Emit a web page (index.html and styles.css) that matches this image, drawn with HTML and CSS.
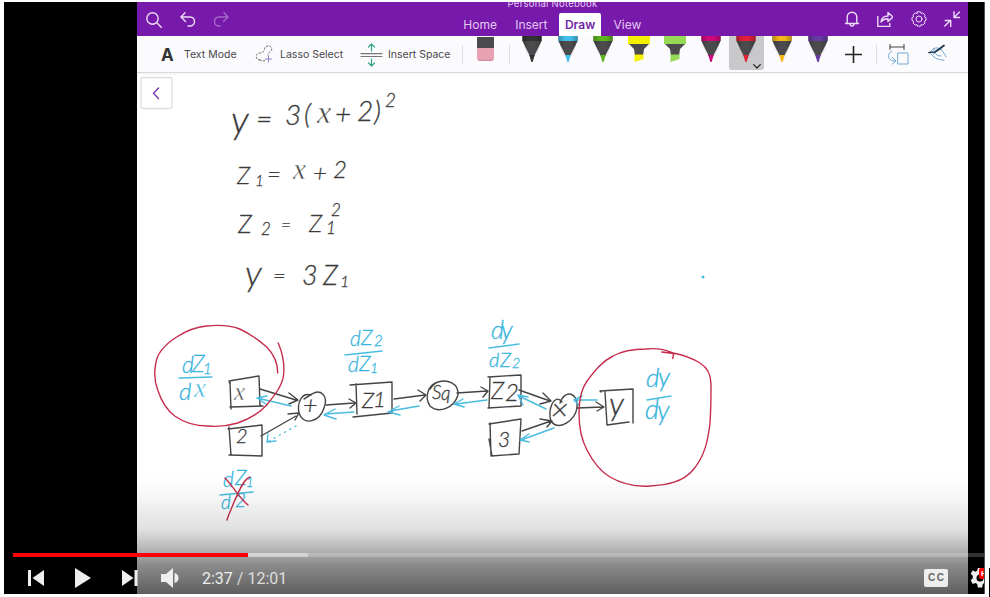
FILE: index.html
```html
<!DOCTYPE html>
<html lang="en">
<head>
<meta charset="utf-8">
<title>Personal Notebook</title>
<link rel="stylesheet" href="styles.css">
</head>
<body>
<svg class="defs" aria-hidden="true">
  <defs>
    <linearGradient id="shade" x1="0" x2="1" y1="0" y2="0">
      <stop offset="0" stop-color="#000" stop-opacity=".25"/>
      <stop offset=".35" stop-color="#000" stop-opacity="0"/>
      <stop offset=".65" stop-color="#000" stop-opacity="0"/>
      <stop offset="1" stop-color="#000" stop-opacity=".25"/>
    </linearGradient>
    <symbol id="pen" viewBox="0 0 20 27">
      <path fill="#4b4b4e" d="M.5 0h19v5l-7.300 15H7.800L.5 5z"/>
      <path fill="currentColor" d="M.5 0h19v5H.5zM7.200 19h5.600L10.600 26H9.400z"/>
      <path fill="url(#shade)" d="M.5 0h19v5l-7.700 21h-3.600L.5 5z"/>
    </symbol>
    <symbol id="marker" viewBox="0 0 22 27">
      <path fill="#4b4b4e" d="M0 7h22l-6 6-1 7H7L6 13z"/>
      <path fill="currentColor" d="M0 0h22v8H0zM6.500 18.500h9v4.500l-9 3z"/>
    </symbol>
  </defs>
</svg>
<div class="player">
  <div class="notebook">
    <header class="titlebar">
      <div class="actions">
        <svg class="ic16" viewBox="0 0 16 16"><circle cx="6.500" cy="6.500" r="5.700"/><path d="M10.800 10.800l4.700 4.700"/></svg>
        <svg class="ic16" viewBox="0 0 16 16"><path d="M5 .8L1 5l4.500 4.500M1.200 5H10c3 0 4.500 2 4.500 4.500S12.500 14 10 14H8"/></svg>
        <svg class="ic16 dim" viewBox="0 0 16 16"><path d="M11 .8L15 5l-4.500 4.500M14.800 5H6C3 5 1.500 7 1.500 9.500S3.500 14 6 14h1"/></svg>
      </div>
      <div class="center">
        <div class="doc">Personal Notebook</div>
        <nav class="tabs"><span>Home</span><span>Insert</span><span class="on">Draw</span><span>View</span></nav>
      </div>
      <div class="actions right">
        <svg class="ic16" viewBox="0 0 16 16"><path d="M1.500 12.500h13M3.200 12.500V6a4.800 4.800 0 0 1 9.600 0v6.500M6 13c.2 2.700 3.800 2.700 4 0"/></svg>
        <svg class="ic16" viewBox="0 0 16 16"><path d="M.8 5.500v10h12v-3M4 11c.5-4 3-6 7-6V1.500L16 6l-5 4.500V7.800C8 7.800 6 8.500 4 11z"/></svg>
        <svg class="ic16 thin" viewBox="0 0 16 16"><circle cx="8" cy="8" r="3"/><path d="M6.500.8h3l.6 1.700 1.700-.6 2.200 2.200-.7 1.600 1.700.9v2.800l-1.700.9.7 1.700-2.200 2.100-1.700-.6-.6 1.700h-3l-.6-1.700-1.700.6L2 12l.7-1.700L1 9.400V6.600l1.700-.9L2 4.100l2.200-2.200 1.700.6z"/></svg>
        <svg class="ic16" viewBox="0 0 16 16"><path d="M15.500 1L10.500 6M10 .8v5.700h6M.8 15l5-5M1.200 9.500h5.500v6"/></svg>
      </div>
    </header>
    <div class="toolbar">
      <span class="big-a">A</span><span class="label l1">Text Mode</span>
      <svg class="lasso" viewBox="0 0 19 19"><path class="dots" d="M5 15C0 15 0 8 5 8c2 0 4-1 4.500-4C10-.5 18 0 16.500 5 16 7 13 7 13 10"/><path class="dots" d="M5 15c2 1.500 5 1.500 6-1"/><path d="M13.500 11v6M10.500 14h6" stroke="#8584c5"/></svg>
      <span class="label l2">Lasso Select</span>
      <svg class="space" viewBox="0 0 23 24"><path stroke="#777" d="M1 10.700h21M1 13.500h21"/><path stroke="#35a487" d="M11.500 8V1.500M8.500 4l3-3 3 3M11.500 16v6.500M8.500 20l3 3 3-3"/></svg>
      <span class="label l3">Insert Space</span>
      <i class="sep s1"></i>
      <span class="eraser"></span>
      <i class="sep s2"></i>
      <div class="pens">
        <span class="cell black"><svg class="pen"><use href="#pen"/></svg></span>
        <span class="cell cyan"><svg class="pen"><use href="#pen"/></svg></span>
        <span class="cell green"><svg class="pen"><use href="#pen"/></svg></span>
        <span class="cell yellow"><svg class="marker"><use href="#marker"/></svg></span>
        <span class="cell lime"><svg class="marker"><use href="#marker"/></svg></span>
        <span class="cell magenta"><svg class="pen"><use href="#pen"/></svg></span>
        <span class="cell red picked"><svg class="pen"><use href="#pen"/></svg><svg class="chev" viewBox="0 0 8 5"><path d="M.7.7L4 4 7.300.7"/></svg></span>
        <span class="cell gold"><svg class="pen"><use href="#pen"/></svg></span>
        <span class="cell violet"><svg class="pen"><use href="#pen"/></svg></span>
      </div>
      <svg class="plus" viewBox="0 0 17 17"><path d="M8.500.5v16M.5 8.500h16"/></svg>
      <i class="sep s3"></i>
      <svg class="shape" viewBox="0 0 22 22"><path stroke="#444" d="M3 3h14M3 0v5.500M17 0v5.500"/><path stroke="#76a9d2" d="M11 9h10v11H11zM5 7C-.5 10 0 17 8 17M5.500 13.500L9 17l-3.500 3"/></svg>
      <svg class="eye" viewBox="0 0 20 18"><path stroke="#6ea6d0" d="M2 9C5 2 13 1 18 13M3 10c4 5 8 6 13 6M5 11c2-4 6-5 9-6M6 5c0 5 3 7 7 7"/><path stroke="#223548" stroke-width="1.700" d="M1 8.500l6-.5 9-6.500"/></svg>
    </div>
    <main class="page">
      <svg class="ink" viewBox="137 73 831 520">
        <rect x="141" y="77.500" width="31" height="31" rx="2" fill="#fff" stroke="#dedee0" stroke-width="1.300"/>
        <path d="M158.500 88l-5 5.300 5 5.300" stroke="#7a3fb0" stroke-width="1.500"/>

        <g class="write">
          <text font-size="38" x="231" y="133">y</text>
          <text font-size="28" x="256 285 304 335 357 374" y="129 125 124 124 120.500 121">=3(+2)</text>
          <text class="x" font-size="32" x="317" y="123">x</text>
          <text font-size="19" x="385" y="107">2</text>

          <text font-size="24" x="237" y="184">Z</text>
          <text font-size="15" x="255" y="186">1</text>
          <text font-size="24" x="267 313 333" y="183 181 178">=+2</text>
          <text class="x" font-size="29" x="293" y="179">x</text>

          <text font-size="25" x="238" y="233">Z</text>
          <text font-size="17" x="261 281 326 331" y="234.500 231 234 216">2=12</text>
          <text font-size="24" x="309" y="232">Z</text>

          <text font-size="36" x="245" y="286">y</text>
          <text font-size="22" x="273" y="283">=</text>
          <text font-size="27" x="302 323" y="285 285">3Z</text>
          <text font-size="16" x="340" y="287">1</text>
        </g>

        <g class="line">
          <path d="M230 384l-1-3 30-5 1 30M230 382l1 27M230 407l33-1"/>
          <path d="M228 429l34-4v31l-33-1M229 427l2 28"/>
          <path d="M350 385l42-3v31l-39 4M356 384l1 30"/>
          <path d="M488 377l33-2v31l-33 2M490 378l-1 29"/>
          <path d="M489 424l32-5-2 35-28 2M490 423l1 33M489 439l3 17"/>
          <path d="M601 392l-1-1 33-2v34M605 392l2 33 22-3"/>
          <path d="M311 395c-10-3-14 9-12 18 5 14 21 8 25-5 5-13-4-19-12-14-4 2-6 4-8 5"/>
          <path d="M438 382c-10 3-14 15-8 24 9 8 24 2 28-11 1-12-11-16-20-13-4 1-6 4-8 7"/>
          <path d="M562 402c-8-10-15 9-11 19 8 11 24-1 26-13 2-15-12-20-17-5"/>
          <path d="M260 389l36 11M289 393l9 7-9 4M261 436l35-20M288 414l11-1-4 7M326 405l28-2M349 399l7 4-6 5M394 399l31-4M418 390l8 5-6 6M457 393l30-2M481 387l7 4-5 6M519 390l31 11M543 393l8 8-11 3M522 431l29-10M540 419l12 2-5 6M577 408l26-1M596 402l8 5-7 4"/>
        </g>
        <g class="write small">
          <text class="x" font-size="25" x="234" y="400">x</text>
          <text font-size="20" x="236" y="443">2</text>
          <text font-size="25" x="303" y="414">+</text>
          <text font-size="22" x="362 373" y="408 407">Z1</text>
          <text font-size="19" x="432 441" y="399 400">Sq</text>
          <text font-size="24" x="491 505" y="399 401">Z2</text>
          <text font-size="21" x="498" y="447">3</text>
          <text font-size="30" x="551" y="420">×</text>
          <text font-size="32" x="609" y="415">y</text>
        </g>

        <g class="blue">
          <path d="M179 378l33-1M345 355l37-4M489 348l30-4M647 400l24-4M220 495l33-3"/>
          <path d="M291 406l-34-8M267 396l-10 2 9 6M354 412l-29 2M335 409l-11 6 12 4M419 406l-29 5M399 406l-11 6 12 3M487 400l-31 4M463 399l-9 5 10 3M546 409l-27-13M528 397l-10-2 5 10M554 428l-33 12M529 434l-9 6 9 2M597 400h-22M582 396l-8 4 5 5"/>
          <path class="dash" d="M296 426l-27 15"/><path d="M268 434l-1 8 9-1"/>
          <text font-size="23" x="182 192 203" y="373 372 374"><tspan>d</tspan><tspan>Z</tspan><tspan font-size="15">1</tspan></text>
          <text font-size="24" x="179" y="400">d</text><text class="x" font-size="27" x="194" y="397">x</text>
          <text font-size="21" x="350 361 374" y="346 345 346"><tspan>d</tspan><tspan>Z</tspan><tspan font-size="15">2</tspan></text>
          <text font-size="21" x="348 359 370" y="372 371 373"><tspan>d</tspan><tspan>Z</tspan><tspan font-size="14">1</tspan></text>
          <text font-size="25" x="491 501" y="339 339">dy</text>
          <text font-size="20" x="489 500 512" y="367 367 368"><tspan>d</tspan><tspan>Z</tspan><tspan font-size="14">2</tspan></text>
          <text font-size="26" x="646 658" y="387 386">dy</text>
          <text font-size="27" x="645 657" y="419 420">dy</text>
          <text font-size="21" x="223 235 246" y="487 485 487"><tspan>d</tspan><tspan>Z</tspan><tspan font-size="13">1</tspan></text>
          <text font-size="19" x="221 235" y="509 507">d2</text>
          <circle cx="703" cy="277" r="1.500" fill="#49bce0" stroke="none"/>
        </g>

        <g class="crimson">
          <path d="M277.700 373c0-10-4-19-11-26-8-7-16-13-27-18-10-4-23-4-33-3-11 1-21 5-30 11-11 7-20 17-21 27-2 10-1 18 2 26 4 12 9 20 17 26 10 7 21 10 33 10 11 1 20 0 30-3 11-4 21-9 29-18 9-11 16-20 17-31 1-13-2-23-5.500-31"/>
          <path d="M661.700 352l12 1.500-1 5M673 353c-9-4-18-5-27-4-13 0-24 2-33 7-12 6-19 16-26 25-7 10-8 21-8 32 0 14 2 26 8 37 6 12 13 21 23 27 12 7 25 10 40 9 17-1 33-4 43-16 12-14 15-30 17-47 1-14 1-27 1-39 0-9-3-16-11-21-8-5-17-8-27-10"/>
          <path d="M225 478c8 8 14 20 23 27M250 477c-7 2-12 17-16 25-2 6-5 11-7 18"/>
        </g>
      </svg>
    </main>
  </div>
  <div class="controls">
    <div class="track"><i class="played"></i><i class="loaded"></i></div>
    <div class="buttons">
      <svg class="prev" viewBox="0 0 16 16"><path d="M0 0h3v16H0zM16 0v16L4.500 8z"/></svg>
      <svg class="play" viewBox="0 0 16 20"><path d="M0 0l16 10L0 20z"/></svg>
      <svg class="next" viewBox="0 0 16 16"><path d="M0 0l11.500 8L0 16zM12.500 0h3v16h-3z"/></svg>
      <svg class="volume" viewBox="0 0 18 20"><path d="M0 6h5l7-6v20l-7-6H0zM13.500 5c5.300 1 5.300 9 0 10z"/></svg>
      <span class="time"><b>2:37</b> / <em>12:01</em></span>
      <span class="cc">CC</span>
      <span class="settings"><svg viewBox="0 0 20 20"><path fill-rule="evenodd" d="M7.800 0h4.400l.6 2.800 2 .9 2.500-1.500 2 3.600-2.100 2v2.400l2.100 2-2 3.700-2.700-1-1.800 1.100-.6 3.500H7.800l-.6-3.500-1.800-1.100-2.700 1-2-3.700 2.100-2V7.800l-2.100-2 2-3.600 2.500 1.500 2-.9zM10 6.500a3.500 3.500 0 1 0 0 7 3.500 3.500 0 0 0 0-7z"/></svg><span class="hd">HD</span></span>
    </div>
  </div>
</div>
<i class="caret"></i>
</body>
</html>
```
FILE: styles.css
```css
* { box-sizing: border-box; }
body { margin: 0; width: 990px; height: 597px; overflow: hidden; background: #fff; position: relative; font-family: Inter, "Liberation Sans", sans-serif; }
svg { display: block; flex: none; fill: none; stroke-linecap: round; stroke-linejoin: round; }
.defs { position: absolute; width: 0; height: 0; }
.player { position: relative; width: 981px; height: 592px; margin: 2px 0 0 4px; background: #000; overflow: hidden; border-right: 1px solid #555; }
.notebook { width: 831px; height: 592px; margin-left: 133px; display: flex; flex-direction: column; background: #fff; }

.titlebar { height: 34px; flex: none; background: #7719aa; color: #e4c8f2; display: flex; justify-content: space-between; overflow: hidden; }
.actions { display: flex; gap: 17.500px; padding: 10px 0 0 9px; width: 240px; }
.actions.right { padding: 9px 8px 0 0; justify-content: flex-end; }
.ic16 { width: 16px; height: 16px; stroke: #eddcf7; stroke-width: 1.400; }
.ic16.dim { opacity: .4; }
.ic16.thin { stroke-width: 1; }
.center { width: 199px; }
.doc { font-size: 9.500px; line-height: 12px; height: 11px; margin-top: -4px; text-align: center; letter-spacing: .25px; padding-right: 0; white-space: nowrap; }
.tabs { display: flex; height: 27px; margin-left: 1px; padding-top: 4px; font-size: 12px; line-height: 23px; }
.tabs span { width: 53px; text-align: center; }
.tabs span:nth-child(2) { width: 51px; }
.tabs span:last-child { width: 50px; }
.tabs .on { width: 42px; margin: 0 2px 0 3px; background: #fff; color: #7027a8; font-weight: 600; border-radius: 2px 2px 0 0; }

.toolbar { height: 37px; flex: none; display: flex; align-items: center; background: #fbfafd; border-bottom: 1px solid #d9d8db; box-shadow: 0 1px 3px #0001; padding: 1px 0 0 24px; color: #48474b; }
.big-a { width: 23px; font: bold 17px Inter, sans-serif; color: #333; }
.label { font-size: 10.500px; letter-spacing: 0; white-space: nowrap; }
.l1 { width: 71px; }
.l2 { width: 80px; }
.l3 { width: 74px; }
.lasso { width: 19px; height: 19px; margin-right: 6px; }
.dots { stroke: #666; stroke-dasharray: 1.500 2; }
.space { width: 23px; height: 24px; margin-right: 5px; stroke-width: 1.200; }
.sep { width: 1px; height: 19px; background: #dfdde1; flex: none; }
.eraser { align-self: flex-start; width: 17px; height: 24px; margin: 0 15px 0 14px; border-radius: 0 0 3px 3px; background: linear-gradient(#4b4b4e 0 11px, #e7a1b2 11px 22px, #cc8799); }
.pens { display: flex; align-self: flex-start; margin: -1px 0 0 4px; }
.cell { width: 35.750px; height: 34px; display: flex; justify-content: center; position: relative; }
.pen { width: 20px; height: 27px; }
.marker { width: 22px; height: 27px; }
.picked { background: #c9c8cb; border-radius: 0 0 3px 3px; }
.chev { position: absolute; right: 3px; bottom: 1px; width: 8px; height: 5px; stroke: #222; stroke-width: 1.200; }
.black { color: #333; } .cyan { color: #43bdeb; } .green { color: #5cb51c; }
.yellow { color: #f4f000; } .lime { color: #95da55; } .magenta { color: #d0087d; }
.red { color: #df2039; } .gold { color: #f5b719; } .violet { color: #673aa4; }
.plus { width: 17px; height: 17px; margin: 0 14px 0 9px; stroke: #222; stroke-width: 1.600; }
.shape { width: 22px; height: 22px; margin: 0 19px 0 10px; }
.eye { width: 20px; height: 18px; margin-top: -4px; }

.page { flex: 1; min-height: 0; }
.ink { width: 831px; height: 520px; }
.write text, .blue text { font-family: Lato, "Liberation Sans", sans-serif; font-weight: 300; font-style: italic; stroke-width: .3; }
.write text { fill: #3c3c3c; stroke: #3c3c3c; }
.blue text { fill: #36b4dd; stroke: #36b4dd; }
.write text.x, .blue text.x { font-family: "Liberation Serif", serif; stroke: #fff; stroke-width: .5; }
.line { stroke: #444; stroke-width: 1.400; }
.blue { stroke: #49bce0; stroke-width: 1.400; }
.dash { stroke-dasharray: 1 5; }
.crimson { stroke: #c62d4d; stroke-width: 1.400; }

.controls { position: absolute; left: 0; right: 0; bottom: 0; height: 118px; padding-top: 77px; background: linear-gradient(#0000 0, #00000008 20px, #00000020 54px, #0000004d 75px, #00000073 88px, #000000a0 118px); }
.track { height: 4px; margin-left: 9px; display: flex; background: #ffffff33; }
.played { width: 235px; background: #f00; }
.loaded { width: 60px; background: #ffffff66; }
.buttons { height: 37px; padding-top: 5px; display: flex; align-items: center; }
.buttons svg { fill: #eee; }
.prev, .next { width: 16px; height: 16px; }
.prev { margin-left: 24px; }
.play { width: 16px; height: 20px; margin-left: 31px; }
.next { margin-left: 31px; }
.volume { width: 18px; height: 20px; margin-left: 23px; }
.time { margin-left: 23px; width: 100px; font: 16px Roboto, sans-serif; color: #ddd; white-space: nowrap; }
.time b { font-weight: 400; color: #eee; }
.time em { font-style: normal; }
.cc { width: 24px; height: 18px; margin-left: auto; border-radius: 2px; background: #eee; color: #666; font: bold 10px/18px "Liberation Sans", sans-serif; letter-spacing: 1.500px; padding-left: 4px; }
.settings { width: 14px; margin-left: 22px; position: relative; height: 20px; }
.settings svg { width: 20px; height: 20px; }
.hd { position: absolute; left: 9px; top: 0; width: 16px; height: 11px; background: #f00; color: #fff; border-radius: 2px; font: bold 8px/11px Roboto, sans-serif; padding-left: 2px; }
.caret { position: absolute; left: 989px; top: 568px; width: 1px; height: 29px; background: #000; }
```
